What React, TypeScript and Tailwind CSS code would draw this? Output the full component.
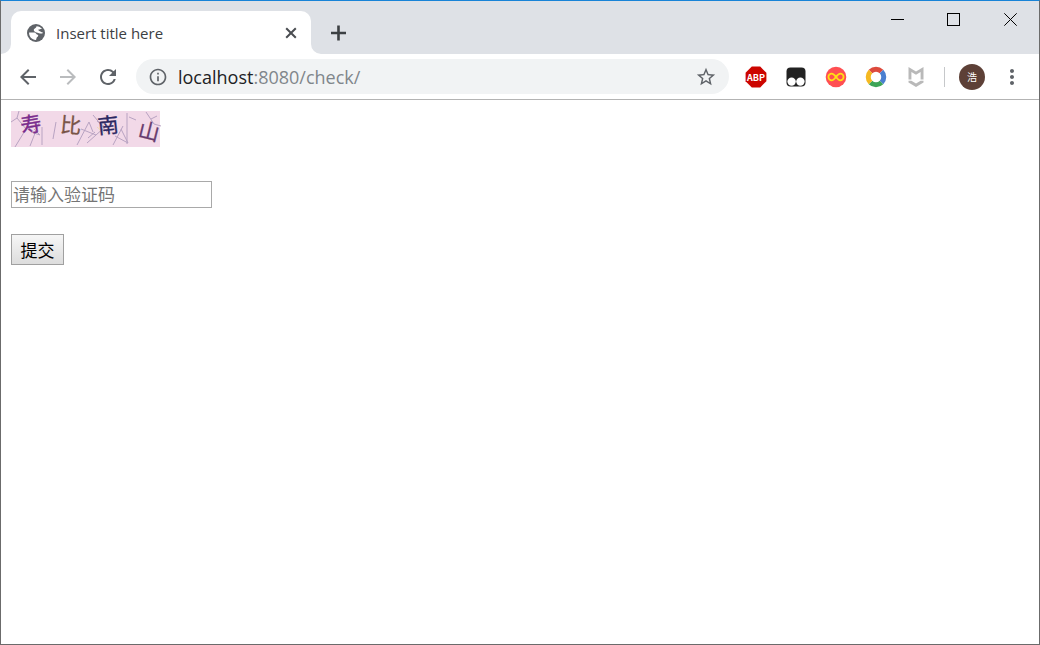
import { MdArrowBack, MdArrowForward, MdInfoOutline, MdMoreVert, MdRefresh, MdStarBorder } from "react-icons/md";

function WindowControls() {
  return (
    <div className="flex self-start ml-auto text-black">
      <button aria-label="Minimize" className="w-14 h-9 flex items-center justify-center">
        <svg className="w-[13px] h-[13px]" viewBox="0 0 13 13" stroke="currentColor">
          <path d="M0 6.5H13" />
        </svg>
      </button>
      <button aria-label="Maximize" className="w-14 h-9 flex items-center justify-center">
        <svg className="w-[13px] h-[13px]" viewBox="0 0 13 13" fill="none" stroke="currentColor">
          <rect x="0.5" y="0.5" width="12" height="12" />
        </svg>
      </button>
      <button aria-label="Close window" className="w-[58px] h-9 flex items-center justify-center">
        <svg className="w-[13px] h-[13px]" viewBox="0 0 13 13" stroke="currentColor">
          <path d="M0.3 0.3L12.7 12.7M12.7 0.3L0.3 12.7" />
        </svg>
      </button>
    </div>
  );
}

function Globe() {
  return (
    <svg className="w-[18px] h-[18px]" viewBox="0 0 18 18">
      <circle cx="9" cy="9" r="9" fill="#5f6368" />
      <path d="M2.1 8.6H7.4C9 8.6 9 10.6 10.6 10.8C11.6 11 11.4 12.6 10.2 13C9.4 13.4 9.6 14.8 9 15.9C5 16 1.8 12.6 2.1 8.6Z" fill="#fff" />
      <path d="M9.5 2.2C12 2.2 13.9 3.3 15 5C13.6 4.6 12.9 5.6 11.7 5.6C10.8 5.8 11.6 7 12.8 7.2C13.8 7.4 14.5 8.5 16 8.4C15.6 9.8 13.4 9.8 12 9.2C10.4 8.4 6.7 8.3 6.8 6C6.8 4.4 9.3 4.4 9.5 2.2Z" fill="#fff" />
    </svg>
  );
}

function TabStrip() {
  return (
    <div className="flex items-end h-[53px] bg-[#dee1e6]">
      {/* Curved feet on both sides of the tab */}
      <svg className="w-[10px] h-[10px] shrink-0" viewBox="0 0 10 10" fill="#fff">
        <path d="M10 0V10H0A10 10 0 0 0 10 0Z" />
      </svg>
      <div className="flex items-center w-[300px] h-[43px] pl-4 pr-[10px] rounded-t-[10px] bg-white">
        <Globe />
        <span className="flex-1 ml-[11px] text-[15px] leading-5 text-[#3c4043]">Insert title here</span>
        <button aria-label="Close tab" className="text-[#4a4d51]">
          <svg className="w-5 h-5" viewBox="0 0 20 20" stroke="currentColor" strokeWidth="2">
            <path d="M5.2 5.2L14.8 14.8M14.8 5.2L5.2 14.8" />
          </svg>
        </button>
      </div>
      <svg className="w-[10px] h-[10px] shrink-0" viewBox="0 0 10 10" fill="#fff">
        <path d="M0 0V10H10A10 10 0 0 1 0 0Z" />
      </svg>
      <button aria-label="New tab" className="ml-[5px] mb-[9px] text-[#3c4043]">
        <svg className="w-6 h-6" viewBox="0 0 24 24" stroke="currentColor" strokeWidth="2.6">
          <path d="M12.5 4.5V19.5M5 12H20" />
        </svg>
      </button>
      <WindowControls />
    </div>
  );
}

function Extensions() {
  return (
    <div className="flex items-center ml-[7px]">
      <button aria-label="Adblock Plus" className="w-10 flex justify-center">
        <svg className="w-[22px] h-[22px]" viewBox="0 0 22 22">
          <path d="M6.8 0.6H15.2L21.4 6.8V15.2L15.2 21.4H6.8L0.6 15.2V6.8Z" fill="#cc0500" />
          <text x="11" y="14.5" textAnchor="middle" fontSize="9" fontWeight="700" fill="#fff" fontFamily="Noto Sans CJK SC">ABP</text>
        </svg>
      </button>
      <button aria-label="Tampermonkey" className="w-10 flex justify-center">
        <svg className="w-[22px] h-[22px]" viewBox="0 0 22 22">
          <rect x="1.5" y="1.5" width="19" height="19" rx="4" fill="#222" />
          <circle cx="6.6" cy="15.6" r="4.2" fill="#fff" />
          <circle cx="15.4" cy="15.6" r="4.2" fill="#fff" />
        </svg>
      </button>
      <button aria-label="Infinity" className="w-10 flex justify-center">
        <svg className="w-[22px] h-[22px]" viewBox="0 0 22 22">
          <circle cx="11" cy="11" r="10.3" fill="#ff4f52" />
          <path d="M11 11C9.5 9 8.5 7.7 6.7 7.7A3.3 3.3 0 0 0 6.7 14.3C8.5 14.3 9.5 13 11 11S13.5 7.7 15.3 7.7A3.3 3.3 0 0 1 15.3 14.3C13.5 14.3 12.5 13 11 11Z" fill="none" stroke="#ffe014" strokeWidth="1.8" />
        </svg>
      </button>
      <button aria-label="Color ring" className="w-10 flex justify-center">
        <svg className="w-[22px] h-[22px]" viewBox="0 0 22 22" fill="none" strokeWidth="5">
          <path d="M5.5 5.5A7.8 7.8 0 0 1 16.5 5.5" stroke="#dd4a3d" />
          <path d="M16.5 5.5A7.8 7.8 0 0 1 16.5 16.5" stroke="#4a7fd0" />
          <path d="M16.5 16.5A7.8 7.8 0 0 1 5.5 16.5" stroke="#3da556" />
          <path d="M5.5 16.5A7.8 7.8 0 0 1 5.5 5.5" stroke="#f5b921" />
        </svg>
      </button>
      <button aria-label="WebAdvisor" className="w-10 flex justify-center">
        <svg className="w-[22px] h-[22px]" viewBox="0 0 22 22" fill="#b9b9b9">
          <path d="M3.5 1L11 5.4L18.5 1V13.6H15.6V6L11 8.8L6.4 6V13.6H3.5Z" />
          <path d="M3.5 14.8L6.4 14.8L11 17.6L15.6 14.8L18.5 14.8V16.4L11 21L3.5 16.4Z" />
        </svg>
      </button>
    </div>
  );
}

function Toolbar() {
  return (
    <div className="flex items-center h-[46px] px-[15px] bg-white border-b border-[#b3b3b3] text-[#5f6368]">
      <div className="flex gap-4">
        <button aria-label="Back"><MdArrowBack className="w-6 h-6" /></button>
        <button aria-label="Forward" className="text-[#babcbe]"><MdArrowForward className="w-6 h-6" /></button>
        <button aria-label="Reload"><MdRefresh className="w-6 h-6" /></button>
      </div>

      {/* Address bar */}
      <div className="flex items-center flex-1 h-[35px] ml-4 pl-3 pr-3 rounded-full bg-[#f1f3f4]">
        <MdInfoOutline className="w-5 h-5" />
        <div className="flex-1 ml-[10px] text-[18px] leading-6 text-[#80868b]">
          <span className="text-[#202124]">localhost</span>:8080/check/
        </div>
        <button aria-label="Bookmark this page"><MdStarBorder className="w-[22px] h-[22px]" /></button>
      </div>

      <Extensions />
      <div className="w-px h-5 ml-2 bg-[#c6c8ca]" />
      <button aria-label="Profile" className="w-[26px] h-[26px] ml-[14px] rounded-full bg-[#5d4037] text-white text-[10px] leading-none">
        浩
      </button>
      <button aria-label="Menu" className="ml-[15px]"><MdMoreVert className="w-6 h-6" /></button>
    </div>
  );
}

function Captcha() {
  return (
    <svg className="block w-[150px] h-[38px] overflow-visible" viewBox="0 0 150 38" role="img" aria-label="captcha">
      <rect y="1" width="149" height="36" fill="#f2d9e8" />
      <g fill="none" stroke="#b8a3c2" strokeWidth="1">
        <path d="M0 12L6 8L8 1M6 8L15 19L4 37M15 19L26 16M19 36L28 13M20 22L29 25L23 19M31 17V35M42 29L45 12" />
        <path d="M66 35L78 12L82 22M70 19L85 25M77 28L84 22M76 33L94 17L86 11M82 5L96 22" />
        <path d="M102 35L112 16M104 26L117 33L110 19M116 3V34" />
        <path d="M118 7L125 10M135 2L143 14L150 16M140 9L146 6" />
      </g>
      <path d="M86 17L94 24" stroke="#eedbb5" fill="none" />
      <g fontSize="21" textAnchor="middle" strokeWidth="0.3">
        <text x="20" y="22" fill="#7b2d8d" stroke="#7b2d8d" transform="rotate(-10 20 14)">寿</text>
        <text x="60" y="23" fill="#795447" stroke="#795447" transform="rotate(5 60 15)">比</text>
        <text x="97" y="23" fill="#2c2862" stroke="#2c2862" transform="rotate(-6 97 15)">南</text>
        <text x="138" y="29" fill="#673b6e" stroke="#673b6e" transform="rotate(14 138 21)">山</text>
      </g>
    </svg>
  );
}

export default function App() {
  return (
    <div className="min-h-screen flex flex-col bg-white border border-[#6b6b6b] border-t-[#1883d7] font-['Open_Sans','Noto_Sans_CJK_SC',sans-serif]">
      <TabStrip />
      <Toolbar />

      {/* Page */}
      <form className="flex flex-col items-start p-[10px] text-[17px] font-['Noto_Sans_CJK_SC',sans-serif]">
        <Captcha />
        <input
          type="text"
          aria-label="验证码"
          placeholder="请输入验证码"
          className="w-[201px] h-[27px] mt-[33px] px-px pb-0.5 border border-[#a9a9a9] placeholder:text-[#757575]"
        />
        <button
          type="button"
          className="w-[53px] h-[31px] mt-[26px] border border-[#a0a0a0] bg-gradient-to-b from-[#f6f6f6] to-[#dddddd] text-black leading-6"
        >
          提交
        </button>
      </form>
    </div>
  );
}
